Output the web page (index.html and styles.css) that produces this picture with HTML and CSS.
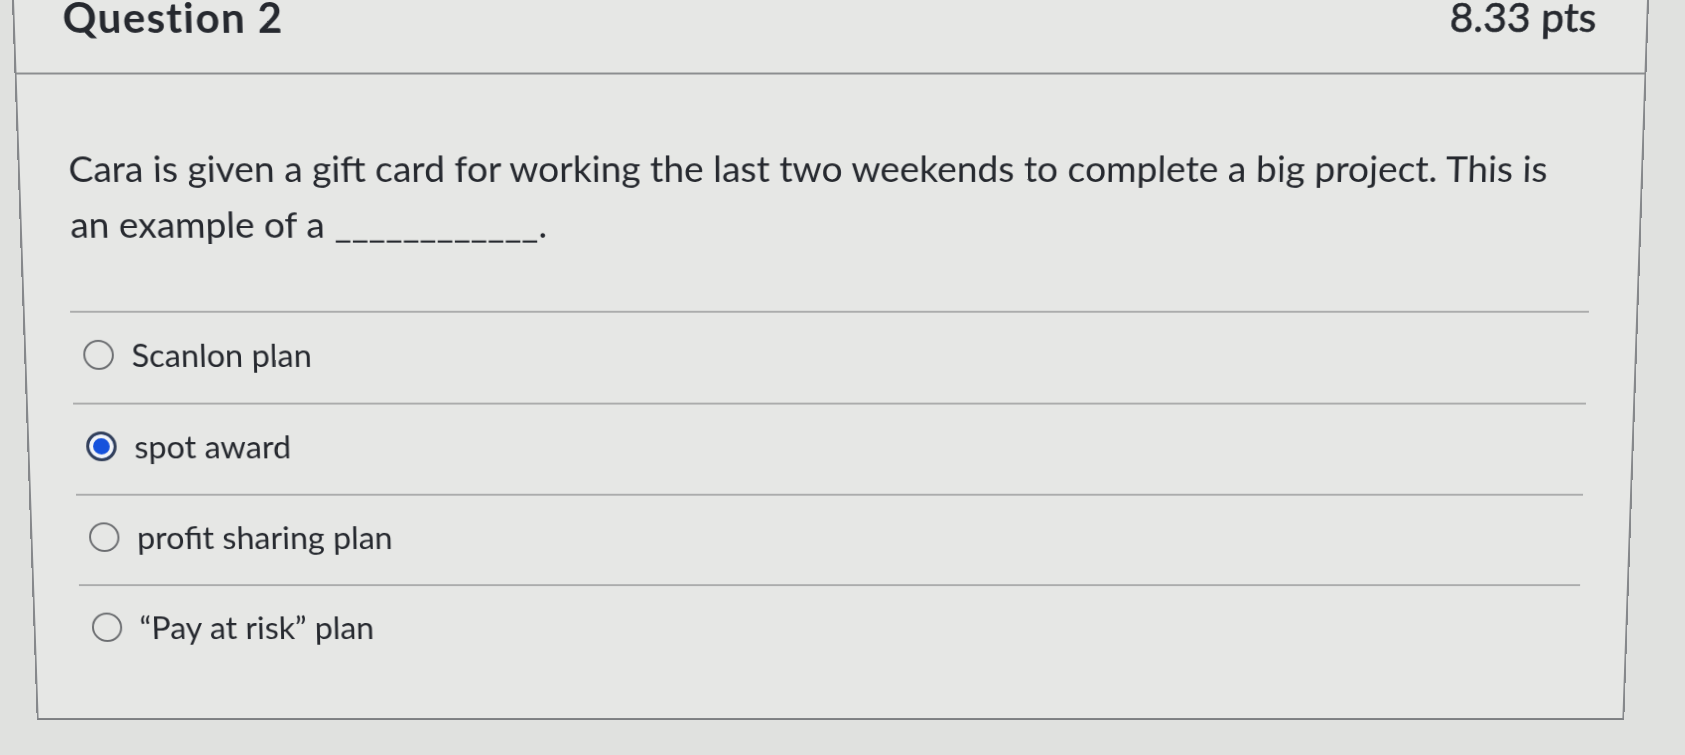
FILE: index.html
```html
<!DOCTYPE html>
<html lang="en">
<head>
<meta charset="utf-8">
<title>Question 2</title>
<link rel="stylesheet" href="styles.css">
</head>
<body>
<div class="page">
  <section class="question">
    <header class="q-header">
      <span class="q-name">Question 2</span>
      <span class="q-points">8.33 pts</span>
    </header>
    <div class="q-body">
      <p class="q-text">Cara is given a gift card for working the last two weekends to complete a big project. This is an example of a ____________.</p>
      <ul class="answers">
        <li class="answer"><span class="radio"></span><span class="label">Scanlon plan</span></li>
        <li class="answer"><span class="radio checked"></span><span class="label">spot award</span></li>
        <li class="answer"><span class="radio"></span><span class="label">profit sharing plan</span></li>
        <li class="answer"><span class="radio"></span><span class="label">“Pay at risk” plan</span></li>
      </ul>
    </div>
  </section>
</div>
</body>
</html>
```

FILE: styles.css
```css
html, body {
  margin: 0;
  padding: 0;
  background: #e0e1df;
  height: 100%;
  overflow: hidden;
}

body {
  font-family: Lato, "Open Sans", sans-serif;
  color: #26292f;
}

.page {
  padding-left: 12px;
  width: 1637px;
}

/* the reference is a photo of a screen: slight keystone perspective */
.question {
  background: #e6e7e5;
  border-left: 2px solid #86888b;
  border-right: 2px solid #86888b;
  border-bottom: 2px solid #7d7f82;
  height: 745px;
  box-sizing: border-box;
  transform-origin: 50% 0;
  transform: perspective(2000px) rotateX(-4.8deg);
}

.q-header {
  display: flex;
  justify-content: space-between;
  align-items: flex-start;
  height: 75px;
  box-sizing: border-box;
  border-bottom: 2px solid #8c8e90;
  padding: 0 50px 0 48px;
}

.q-name {
  font-size: 42px;
  line-height: 34px;
  font-weight: 700;
  letter-spacing: 1.4px;
}

.q-points {
  font-size: 41px;
  line-height: 34px;
  font-weight: 400;
  -webkit-text-stroke: 0.6px #26292f;
}

.q-body {
  padding: 66px 48px 0 46px;
}

.q-text {
  margin: 0 0 0 3px;
  max-width: 1515px;
  font-size: 37.4px;
  line-height: 57px;
}

.answers {
  list-style: none;
  margin: 61px 0 0 0;
  padding: 0;
}

.answer {
  display: flex;
  align-items: center;
  height: 95px;
  border-top: 2px solid #abacac;
  padding: 0 0 6px 12px;
  box-sizing: border-box;
}

.radio {
  width: 31px;
  height: 31px;
  border: 2.5px solid #6c6e71;
  border-radius: 50%;
  box-sizing: border-box;
  flex: none;
  margin-right: 18px;
}

.radio.checked {
  border: 3px solid #33405a;
  background: #1652dc;
  box-shadow: inset 0 0 0 4px #f2f4f7;
}

.label {
  font-size: 33px;
  line-height: 1;
}
```
